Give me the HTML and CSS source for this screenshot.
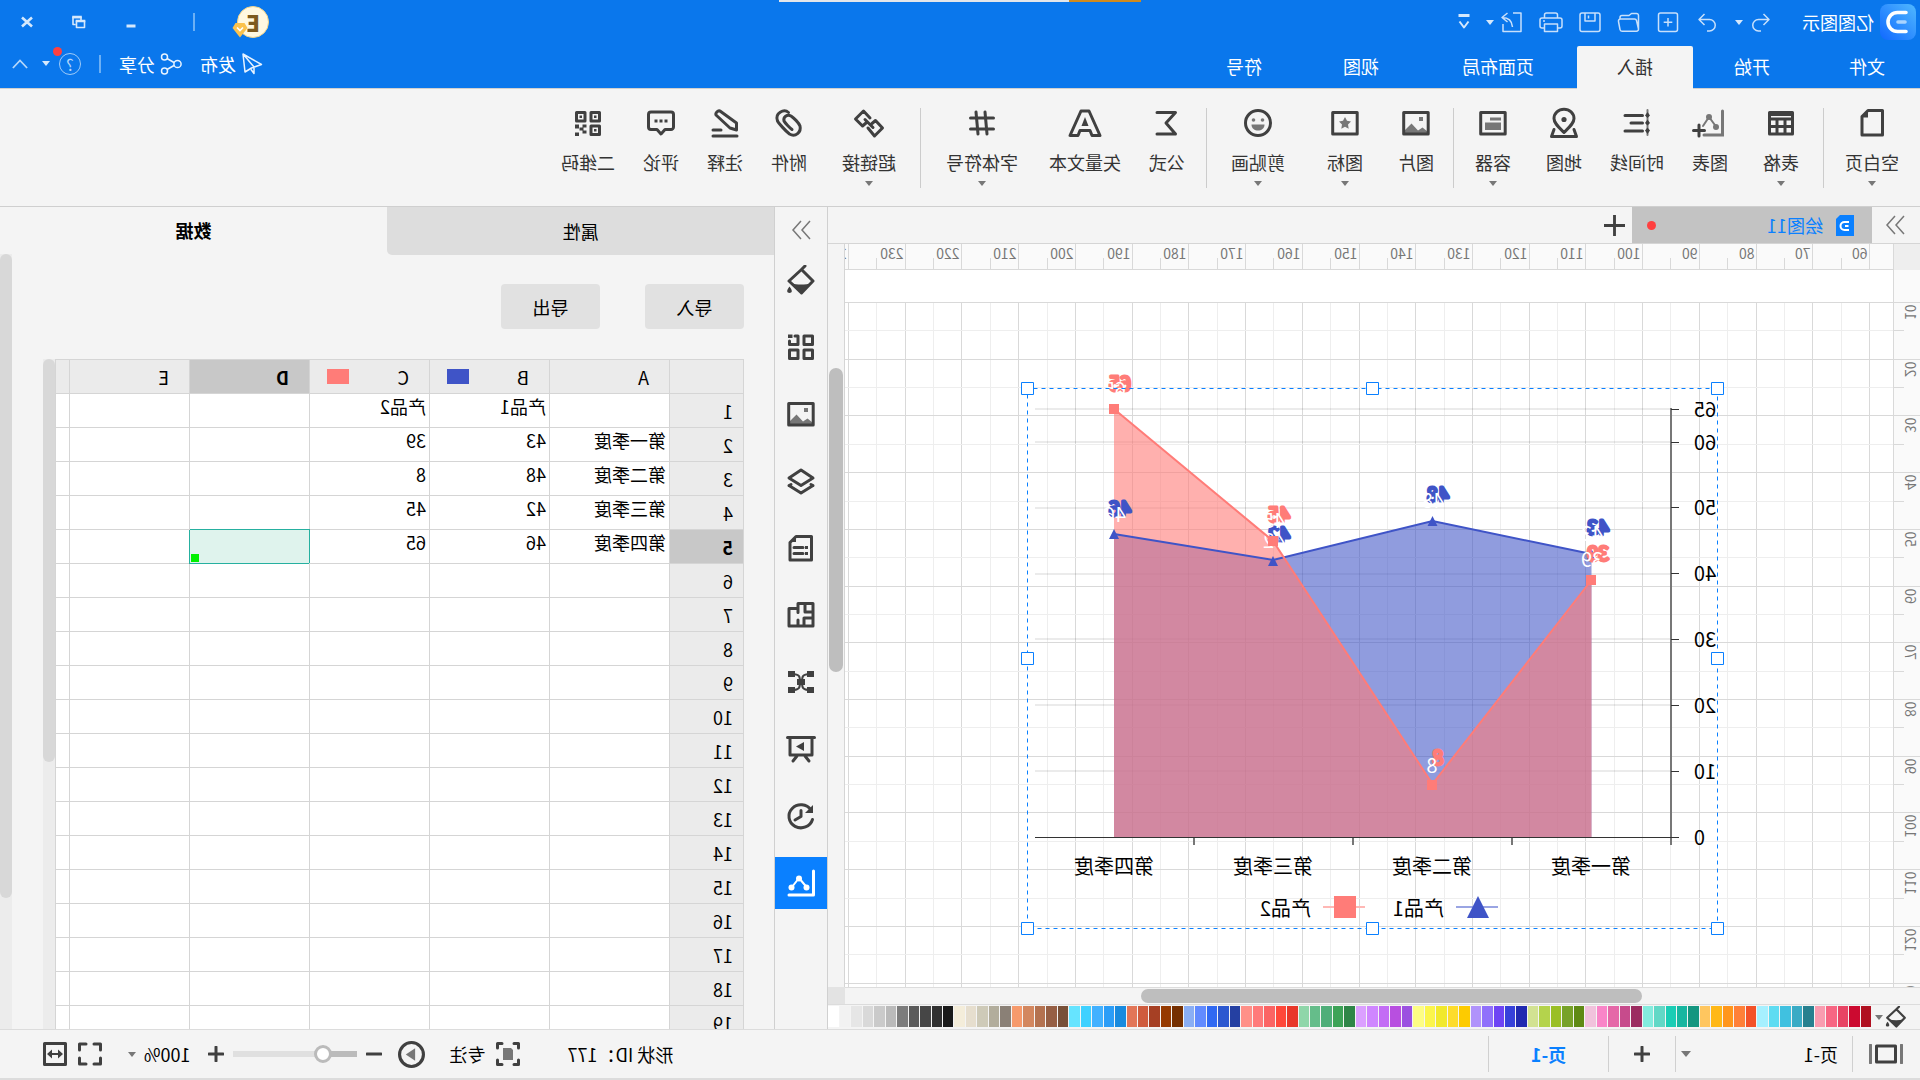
FILE: index.html
```html
<!DOCTYPE html>
<html lang="zh-CN">
<head>
<meta charset="utf-8">
<title>亿图图示</title>
<link rel="stylesheet" href="styles.css">
</head>
<body>
<div class="app">
  <header class="header">
    <div class="top-strip"></div>
    <div class="titlebar">
      <svg class="logo" viewBox="0 0 36 36"><defs><linearGradient id="logo-fill" x1="0" y1="0" x2="1" y2="1"><stop offset="0" stop-color="#50b8ff"/><stop offset="1" stop-color="#1068ff"/></linearGradient></defs><rect width="36" height="36" rx="8" fill="url(#logo-fill)"/><path d="M10 8.500h8.500a9.500 9.500 0 0 1 0 19H10" fill="none" stroke="#fff" stroke-width="3.600" stroke-linecap="round"/><path d="M11 18h7" stroke="#a9d4ff" stroke-width="3.600" stroke-linecap="round"/></svg>
      <span class="app-name">亿图图示</span>
      <div class="quick">
        <button class="icon-btn" aria-label="撤销"><svg viewBox="0 0 24 24"><path d="M9.500 4L4 9.500 9.500 15M4 9.500h10.500a5.700 5.700 0 0 1 0 11.500H12"/></svg></button>
        <button class="caret-btn" aria-label="撤销列表"></button>
        <button class="icon-btn" aria-label="重做"><svg viewBox="0 0 24 24"><path d="M14.500 4L20 9.500 14.500 15M20 9.500H9.500a5.700 5.700 0 0 0 0 11.500H12"/></svg></button>
        <button class="icon-btn" aria-label="新建"><svg viewBox="0 0 24 24"><rect x="2.500" y="3" width="19" height="18.500" rx="2"/><path d="M12 8v8.500M7.700 12.200h8.600"/></svg></button>
        <button class="icon-btn" aria-label="打开"><svg viewBox="0 0 24 24"><path d="M2.500 19V5.500a2 2 0 0 1 2-2h5l2.500 2h7a2 2 0 0 1 2 2V9M2.500 19l2-8.500a2 2 0 0 1 2-1.500h14a2 2 0 0 1 2 2.500l-1.500 8a2 2 0 0 1-2 1.700H4.500a2 2 0 0 1-2-2.200z"/></svg></button>
        <button class="icon-btn" aria-label="保存"><svg viewBox="0 0 24 24"><rect x="2" y="3" width="20" height="18.500" rx="2"/><path d="M7 3v8h10V3M13.500 5.500v3"/></svg></button>
        <button class="icon-btn" aria-label="打印"><svg viewBox="0 0 24 24"><path d="M5.500 8V5a2 2 0 0 1 2-2h9a2 2 0 0 1 2 2v3M5.500 18H3a2 2 0 0 1-2-2v-6a2 2 0 0 1 2-2h18a2 2 0 0 1 2 2v6a2 2 0 0 1-2 2h-2.500M5.500 14h13v7.500h-13zM18 11h2"/></svg></button>
        <button class="icon-btn" aria-label="导出"><svg viewBox="0 0 24 24"><path d="M11 3H3v18.500h18V14M16.500 3L22 7.500 16.500 12M22 7.500c-6 0-10 3-10.500 9.500"/></svg></button>
        <button class="caret-btn" aria-label="导出列表"></button>
        <button class="icon-btn customize" aria-label="自定义"><svg viewBox="0 0 24 24"><path d="M6.500 5.500h11" stroke-width="3"/><path d="M7.500 11.500l4.500 6 4.500-6" stroke-width="2"/></svg></button>
      </div>
      <div class="window-tools">
        <button class="avatar" aria-label="账户">E<svg viewBox="0 0 16 16"><path d="M3.500 1h9L15.500 6 8 15.500.5 6z" fill="#fbc24d"/><path d="M5 5.500l3 3 3-3" fill="none" stroke="#fff" stroke-width="1.700"/></svg></button>
        <i class="bar"></i>
        <button class="icon-btn" aria-label="最小化"><svg viewBox="0 0 24 24"><path d="M7.500 16h9" stroke-width="3"/></svg></button>
        <button class="icon-btn" aria-label="还原"><svg viewBox="0 0 24 24"><path d="M10 10V7.500h8v7H15.500M6.500 11h8v6.500h-8z" stroke-width="1.600"/><path d="M9.200 7h9.600M5.700 11h9.600" stroke-width="2.600"/></svg></button>
        <button class="icon-btn" aria-label="关闭"><svg viewBox="0 0 24 24"><path d="M7 7.500l10 9M17 7.500l-10 9" stroke-width="2.600"/></svg></button>
      </div>
    </div>
    <div class="menubar">
      <nav class="tabs">
        <a href="#" class="tab first">文件</a><a href="#" class="tab">开始</a><a href="#" class="tab active">插入</a><a href="#" class="tab wide">页面布局</a><a href="#" class="tab">视图</a><a href="#" class="tab">符号</a>
      </nav>
      <div class="share-tools">
        <button class="text-btn"><svg viewBox="0 0 22 22"><path d="M1.500 11.500L20 1l-2 18-6.500-4zM20 1L9 14v6.500l3-4"/></svg>发布</button>
        <button class="text-btn"><svg viewBox="0 0 22 22"><circle cx="4.500" cy="11" r="3.600"/><circle cx="17.500" cy="4" r="3"/><circle cx="17.500" cy="18" r="3"/><path d="M8 9.500L15 5.500M8 12.500l7 4"/></svg>分享</button>
        <i class="bar"></i>
        <button class="help" aria-label="帮助">?<i class="badge"></i></button>
        <button class="caret-btn" aria-label="帮助列表"></button>
        <button class="collapse" aria-label="收起"><svg viewBox="0 0 18 12"><path d="M1 10.500L9 2l8 8.500"/></svg></button>
      </div>
    </div>
  </header>

  <div class="ribbon">
    <div class="group">
      <button class="tool drop"><svg viewBox="0 0 30 30"><path class="d" d="M4.500 2.500H19l6 6v18.500H4.500z"/><path class="f" d="M19 2l7 7.500h-7z"/></svg>空白页</button>
    </div>
    <div class="group">
      <button class="tool drop"><svg viewBox="0 0 30 30"><path class="d" d="M3.500 4.500h23v21.500h-23zM3.500 11h23M3.500 18.500h23M11 11v15M19 11v15"/><path class="f" d="M3 4h24v4H3z"/></svg>表格</button>
      <button class="tool"><svg viewBox="0 0 30 30"><path class="g" d="M2.500 3v24H21" /><path class="g thin" d="M9 18.500L16 9l6 9"/><circle class="gf" cx="9" cy="19" r="3"/><circle class="gf" cx="16" cy="9" r="3"/><path class="d" d="M26 17v11M20.500 22.500h11"/></svg>图表</button>
      <button class="tool"><svg viewBox="0 0 30 30"><path class="g thin" d="M4.500 2v25"/><path class="d" d="M9.500 7.500H27M9.500 15H21M9.500 23H27"/><path class="f" d="M4.500 4l2.500 3.500L4.500 10 2 7.500zM4.500 11.500L7 15l-2.500 2.500L2 15zM4.500 19.500L7 22.500 4.500 26 2 22.500z"/></svg>时间线</button>
      <button class="tool"><svg viewBox="0 0 30 30"><path class="d" d="M15 24.500C9 18.500 5 15 5 10.500a10 9.300 0 0 1 20 0C25 15 21 18.500 15 24.500zM5 21.500L2.500 28.500h25L25 21.500"/><circle class="f" cx="15" cy="11.500" r="2.600"/></svg>地图</button>
      <button class="tool drop"><svg viewBox="0 0 30 30"><path class="d" d="M2.800 4.500h24.500v21.500H2.800z"/><path class="gf" d="M7 9.500h11v3H7zM7 14.500h16V22H7z"/></svg>容器</button>
    </div>
    <div class="group to-media">
      <button class="tool"><svg viewBox="0 0 30 30"><path class="gf" d="M3.500 23.500l5-4 4.500 3 6.500-7 7 7v3h-23zM8 9h4v4H8z"/><path class="d" d="M2.800 4.500h24.500v21.500H2.800z"/></svg>图片</button>
      <button class="tool drop"><svg viewBox="0 0 30 30"><path class="d" d="M2.800 4.500h24.500v21.500H2.800z"/><path class="gf" d="M15 9l2 3.700 4 .8-3 3 .7 4.300-3.700-2-3.700 2 .7-4.300-3-3 4-.8z"/></svg>图标</button>
      <button class="tool drop"><svg viewBox="0 0 30 30"><circle class="d" cx="15" cy="15" r="12.500"/><circle class="gf" cx="10.500" cy="12" r="1.800"/><circle class="gf" cx="19.500" cy="12" r="1.800"/><path class="gf" d="M8.500 16.500h13c0 8-13 8-13 0z"/></svg>剪贴画</button>
    </div>
    <div class="group to-text">
      <button class="tool"><svg viewBox="0 0 30 30"><path class="d" d="M25 4.500H6.500L16 15 6.500 26H25"/></svg>公式</button>
      <button class="tool"><svg viewBox="0 0 30 30"><path class="d" d="M11 3h8l11 24.500h-8l-2-5H10l-2 5H0z"/><path class="f" d="M15 9l3.500 9h-7z"/></svg>矢量文本</button>
      <button class="tool drop"><svg viewBox="0 0 30 30"><path class="d" d="M3.500 10h23M3.500 21h23M12 4l-2 22M21 4l-2 22"/></svg>字体符号</button>
    </div>
    <div class="group">
      <button class="tool drop"><svg viewBox="0 0 30 30"><path class="d" d="M14 10l6.500-7 8 8-7 7-3.500-3M16 20l-6.500 8-8-8 7-7.500 3.500 3M11 19.500l8-8"/></svg>超链接</button>
      <button class="tool"><svg viewBox="0 0 30 30"><path class="d" d="M15.500 4.500C20 .5 29.500 5 26.500 13c-1 2-8 10-12 13-6 3.500-12-2-10.500-8 1-3 6-8 9-10 4-2 8 1 7 5-1 2-6 7-8 8.500"/></svg>附件</button>
      <button class="tool"><svg viewBox="0 0 30 30"><path class="d" d="M20 3c1-1 5 1.500 4 4L10 20l-6.500 2V15zM3 28h24M19 22h8"/></svg>注释</button>
      <button class="tool"><svg viewBox="0 0 30 30"><path class="d" d="M5 4h20a2.500 2.500 0 0 1 2.500 2.500V19a2.500 2.500 0 0 1-2.500 2.500h-6L15 26l-4-4.500H5A2.500 2.500 0 0 1 2.500 19V6.500A2.500 2.500 0 0 1 5 4z"/><path class="f" d="M8.500 11.500h3v3h-3zM13.500 11.500h3v3h-3zM18.500 11.500h3v3h-3z"/></svg>评论</button>
      <button class="tool"><svg viewBox="0 0 30 30"><path class="d" d="M3.500 4.500h8.500v8.500H3.500zM18 4.500h8.500v8.500H18zM3.500 18H12v8.500H3.500z"/><path class="f" d="M6.500 7.500H9V10H6.500zM21 7.500h2.500V10H21zM6.500 21H9v2.500H6.500zM16.500 16.500h4v3h3v3h-3v3h-4v-3h3v-3h-3zM24 16.500h4v4h-4zM24 24.500h4V28h-4z"/></svg>二维码</button>
    </div>
  </div>

  <main class="main">
    <section class="editor">
      <div class="doc-tabs">
        <button class="expand" aria-label="展开"><svg class="dbl" viewBox="0 0 18 18"><path d="M1 0l8 9-8 9M10 0l8 9-8 9"/></svg></button>
        <a href="#" class="doc-tab"><svg viewBox="0 0 18 21"><path d="M0 0h14l4 4v17H0z" fill="#0a80ff"/><path d="M5 7h4.500a3.800 3.800 0 0 1 0 8H5M5.500 11H9" fill="none" stroke="#fff" stroke-width="2"/></svg>绘图11<i class="dot"></i></a>
        <button class="add-doc" aria-label="新建文档"><svg viewBox="0 0 22 22"><path d="M11 0v22M0 11h22"/></svg></button>
      </div>
      <div class="board">
        <div class="corner"></div>
        <svg class="ruler-h" id="ruler-h"></svg>
        <div class="gutter"></div>
        <svg class="ruler-v" id="ruler-v"></svg>
        <div class="canvas">
          <svg class="grid-lines" id="grid-lines"></svg>
          <svg class="chart" role="img" aria-label="面积图">
            <g transform="translate(-27 -270)">
              <path d="M249 409h636M249 442h636M249 508h636M249 574h636M249 639h636M249 705h636M249 771h636" stroke="#000" stroke-opacity=".08" stroke-width="2"/>
              <path d="M328.500 837V554L487.500 521 647 560 806 534V837z" fill="#3f54c7" fill-opacity=".58"/>
              <path d="M328.500 837V580L487.500 784 647 541 806 409V837z" fill="#ff7c78" fill-opacity=".6"/>
              <path d="M328.500 554L487.500 521 647 560 806 534" fill="none" stroke="#3f54c7" stroke-width="2"/>
              <path d="M328.500 549l5 10h-10zM487.500 516l5 10h-10zM647 556l5 10h-10zM806 529l5 10h-10z" fill="#3f54c7"/>
              <g class="label-back blue"><text x="322" y="535">43</text><text x="482" y="502">48</text><text x="641" y="542">42</text><text x="800" y="516">46</text></g>
              <g class="label"><text x="328" y="541">43</text><text x="487" y="508">48</text><text x="646" y="548">42</text><text x="805" y="522">46</text></g>
              <path d="M328.500 580L487.500 784 647 541 806 409" fill="none" stroke="#ff7c78" stroke-width="2"/>
              <path d="M324 575h10v10h-10zM483 780h10v10h-10zM642 536h10v10h-10zM801 404h10v10h-10z" fill="#ff7c78"/>
              <g class="label-back coral"><text x="322" y="561">39</text><text x="482" y="765">8</text><text x="641" y="522">45</text><text x="800" y="391">65</text></g>
              <g class="label"><text x="328" y="567">39</text><text x="488" y="773">8</text><text x="646" y="528">45</text><text x="805" y="397">65</text></g>
              <path d="M249 408v437M408 837v8M567 837v8M726 837v8" fill="none" stroke="#777" stroke-width="2"/>
              <path d="M241 409.500h8M241 442.500h8M241 507.500h8M241 573.500h8M241 639.500h8M241 705.500h8M241 771.500h8M241 837.500h644" fill="none" stroke="#333"/>
              <g class="axis end"><text x="226" y="417">65</text><text x="226" y="450">60</text><text x="226" y="515">50</text><text x="226" y="581">40</text><text x="226" y="647">30</text><text x="226" y="713">20</text><text x="226" y="779">10</text><text x="226" y="845">0</text></g>
              <g class="axis mid"><text x="329" y="874">第一季度</text><text x="488" y="874">第二季度</text><text x="647" y="874">第三季度</text><text x="806" y="874">第四季度</text></g>
              <path d="M422 907h42" stroke="#9aa5e3" stroke-width="2"/><path d="M442 896l11 22h-22z" fill="#3f54c7"/>
              <path d="M555 907h42" stroke="#ffb8b5" stroke-width="2"/><path d="M564 896h22v22h-22z" fill="#ff7c78"/>
              <g class="axis"><text x="476" y="916">产品1</text><text x="609" y="916">产品2</text></g>
              <g fill="none" stroke="#0a80ff"><path d="M202.500 388.500h690v540h-690z" stroke-dasharray="4 4"/>
              <path fill="#fff" d="M196.500 382.500h12v12h-12zM541.500 382.500h12v12h-12zM886.500 382.500h12v12h-12zM196.500 652.500h12v12h-12zM886.500 652.500h12v12h-12zM196.500 922.500h12v12h-12zM541.500 922.500h12v12h-12zM886.500 922.500h12v12h-12z"/></g>
            </g>
          </svg>
        </div>
        <div class="scroll-v"><i></i></div>
        <div class="scroll-h"><i></i></div>
        <div class="scroll-corner"></div>
      </div>
      <div class="palette">
        <button class="fill-btn" aria-label="填充颜色"><svg viewBox="0 0 30 30"><use href="#bucket"/></svg><i class="caret"></i></button>
        <div class="swatches" id="swatches"></div>
      </div>
    </section>

    <aside class="dock">
      <button class="dock-toggle" aria-label="收起面板"><svg class="dbl" viewBox="0 0 18 18"><path d="M0 0l8 9-8 9M9 0l8 9-8 9"/></svg></button>
      <button aria-label="填充"><svg viewBox="0 0 30 30"><g id="bucket"><path class="d" d="M14.500 4.500L27 16 14.500 28 3 16zM14.500 4.500L11 1"/><path class="f" d="M4 18c7 2 15 2 21 0L14.500 28zM26.500 21.500c4 5 2 6.500 0 6.500s-4-1.500 0-6.500z"/></g></svg></button>
      <button aria-label="主题"><svg viewBox="0 0 30 30"><path class="d" d="M3.500 4h8.500v8.500H3.500zM3.500 18H12v8.500H3.500zM18 18h8.500v8.500H18zM21 4h-3v8.500h8.500V9"/><path class="f" d="M23.500 2.500H28V6h-4.500z"/></svg></button>
      <button aria-label="图片"><svg viewBox="0 0 30 30"><path class="gf" d="M3.500 23.500l5-4 4.500 3 6.500-7 7 7v3h-23zM8 9h4v4H8z"/><path class="d" d="M2.800 4.500h24.500v21.500H2.800z"/></svg></button>
      <button aria-label="图层"><svg viewBox="0 0 30 30"><path class="d" d="M15 4l12 8-12 7.500L3 12zM3 19.500l12 7.500 12-7.500M3 19.500l2-1M27 19.500l-2-1"/></svg></button>
      <button aria-label="页面"><svg viewBox="0 0 30 30"><path class="d" d="M4.500 3.500H20l6 6v17.500H4.500z"/><path class="d" d="M13 14.500h9M13 20.500h9"/><path class="f" d="M20 3l6 6h-6zM8 13h3v3H8zM8 19h3v3H8z"/></svg></button>
      <button aria-label="平面图"><svg viewBox="0 0 30 30"><path class="d" d="M3 3.500h15v5h9V26H3zM18 8.500v4M3 12h8V4M3 18h9v8M18 20v6"/></svg></button>
      <button aria-label="思维导图"><svg viewBox="0 0 30 30"><path class="d thin" d="M6 7c8 0 8 3 8 8s0 8-8 8M24 7c-8 0-8 3-8 8s0 8 8 8"/><path class="f" d="M2 4h7v6H2zM21 4h7v6h-7zM2 20h7v6H2zM21 20h7v6h-7zM11 12h8v6h-8z"/></svg></button>
      <button aria-label="演示"><svg viewBox="0 0 30 30"><path class="d" d="M1.500 3.500h27M4 4v17h22V4M11 22l-4 5M19 22l4 5"/><path class="f" d="M12 8l8 4.500-8 4.500z"/></svg></button>
      <button aria-label="历史"><svg viewBox="0 0 30 30"><path class="d" d="M5 9a12 11.500 0 1 1-1.500 9.500M15 9.500v6l6 3.500"/><path class="f" d="M3 4v8h8z"/></svg></button>
      <button class="on" aria-label="数据"><svg viewBox="0 0 30 30"><path class="d" d="M2.500 3v24H27"/><path class="d thin" d="M9.500 19L17 10l7 9"/><circle class="f" cx="9.500" cy="19.500" r="3"/><circle class="f" cx="17" cy="10.500" r="3"/><circle class="f" cx="24.500" cy="19.500" r="3"/></svg></button>
    </aside>

    <section class="panel">
      <nav class="panel-tabs"><a href="#" class="panel-tab">属性</a><a href="#" class="panel-tab active">数据</a></nav>
      <div class="panel-body">
        <div class="panel-content">
          <div class="actions"><button>导入</button><button>导出</button></div>
          <div class="sheet">
            <div class="sheet-view">
              <table>
                <colgroup><col class="c-num"><col class="c-col"><col class="c-col"><col class="c-col"><col class="c-col"><col class="c-col"><col></colgroup>
                <thead><tr><th></th><th>A</th><th>B<i class="key blue"></i></th><th>C<i class="key coral"></i></th><th class="sel">D</th><th>E</th><th></th></tr></thead>
                <tbody>
                <tr><th>1</th><td></td><td>产品1</td><td>产品2</td><td></td><td></td><td></td></tr>
                <tr><th>2</th><td>第一季度</td><td>43</td><td>39</td><td></td><td></td><td></td></tr>
                <tr><th>3</th><td>第二季度</td><td>48</td><td>8</td><td></td><td></td><td></td></tr>
                <tr><th>4</th><td>第三季度</td><td>42</td><td>45</td><td></td><td></td><td></td></tr>
                <tr><th class="sel">5</th><td>第四季度</td><td>46</td><td>65</td><td class="picked"><i></i></td><td></td><td></td></tr>
                <tr><th>6</th><td></td><td></td><td></td><td></td><td></td><td></td></tr>
                <tr><th>7</th><td></td><td></td><td></td><td></td><td></td><td></td></tr>
                <tr><th>8</th><td></td><td></td><td></td><td></td><td></td><td></td></tr>
                <tr><th>9</th><td></td><td></td><td></td><td></td><td></td><td></td></tr>
                <tr><th>10</th><td></td><td></td><td></td><td></td><td></td><td></td></tr>
                <tr><th>11</th><td></td><td></td><td></td><td></td><td></td><td></td></tr>
                <tr><th>12</th><td></td><td></td><td></td><td></td><td></td><td></td></tr>
                <tr><th>13</th><td></td><td></td><td></td><td></td><td></td><td></td></tr>
                <tr><th>14</th><td></td><td></td><td></td><td></td><td></td><td></td></tr>
                <tr><th>15</th><td></td><td></td><td></td><td></td><td></td><td></td></tr>
                <tr><th>16</th><td></td><td></td><td></td><td></td><td></td><td></td></tr>
                <tr><th>17</th><td></td><td></td><td></td><td></td><td></td><td></td></tr>
                <tr><th>18</th><td></td><td></td><td></td><td></td><td></td><td></td></tr>
                <tr><th>19</th><td></td><td></td><td></td><td></td><td></td><td></td></tr>
                </tbody>
              </table>
            </div>
            <div class="track sheet-track"><i></i></div>
          </div>
        </div>
        <div class="track panel-track"><i></i></div>
      </div>
    </section>
  </main>

  <footer class="status">
    <button class="pages" aria-label="页面列表"><svg viewBox="0 0 34 20"><path class="g" d="M1.500 1v18M32.500 1v18"/><path class="d" d="M7.500 2h19v16h-19z"/></svg></button>
    <div class="page-select"><button>页-1</button><i class="caret"></i></div>
    <button class="add-page" aria-label="新建页"><svg viewBox="0 0 16 16"><path class="d" d="M8 1v14M1 8h14"/></svg></button>
    <a href="#" class="page-tab">页-1</a>
    <span class="shape-id">形状 ID：177</span>
    <div class="status-tools">
      <button class="focus"><svg viewBox="0 0 24 24"><path class="d" d="M1.500 6V1.500H6M18 1.500h4.500V6M1.500 18v4.500H6M18 22.500h4.500V18"/><path class="gf" d="M7 8l2-2h8v12H7z"/></svg>专注</button>
      <button class="play" aria-label="播放"><svg viewBox="0 0 26 26"><circle class="d" cx="13" cy="13" r="11.500"/><path class="gf" d="M9.500 7l9 6-9 6z"/></svg></button>
      <button class="minus" aria-label="缩小"><svg viewBox="0 0 16 16"><path class="d" d="M1 8h14"/></svg></button>
      <input class="zoom" type="range" min="0" max="100" value="23" aria-label="缩放">
      <button class="plus" aria-label="放大"><svg viewBox="0 0 16 16"><path class="d" d="M8 1v14M1 8h14"/></svg></button>
      <button class="percent">100%<i class="caret"></i></button>
      <button class="fullscreen" aria-label="全屏"><svg viewBox="0 0 24 24"><path class="d" d="M1.500 8V2H8M16 2h6.500v6M1.500 16v6H8M16 22h6.500v-6"/></svg></button>
      <button class="fit" aria-label="适合宽度"><svg viewBox="0 0 24 24"><path class="d" d="M1.500 1.500h21v21h-21z"/><path class="f" d="M4 12l5-4.500V11h6V7.500L20 12l-5 4.500V13H9v3.500z"/></svg></button>
    </div>
  </footer>
</div>
<script src="app.js"></script>
</body>
</html>
```

FILE: styles.css
```css
* { box-sizing: border-box; }
body { margin: 0; overflow: hidden; background: #f4f4f4; }
.app {
  display: flex; flex-direction: column; height: 100vh;
  font: 18px/24px "Noto Sans CJK SC", sans-serif; color: #333;
  background: #f4f4f4;
  transform: scaleX(-1);
}
button { font: inherit; color: inherit; background: none; border: 0; padding: 0; margin: 0; display: flex; align-items: center; justify-content: center; flex: none; white-space: nowrap; }
a { color: inherit; text-decoration: none; }
svg { display: block; flex: none; }
i { display: block; flex: none; }
.d { fill: none; stroke: #404040; stroke-width: 3; stroke-linejoin: round; stroke-linecap: round; }
.g { fill: none; stroke: #777; stroke-width: 3; stroke-linecap: round; }
.thin { stroke-width: 2; }
.f { fill: #404040; }
.gf { fill: #777; }
.caret { width: 0; height: 0; border: 4px solid transparent; border-top: 5px solid #777; border-bottom: 0; }
.blue { background: #3f54c7; fill: #3f54c7; stroke: #3f54c7; }
.coral { background: #ff7c78; fill: #ff7c78; stroke: #ff7c78; }

/* header */
.header { position: relative; flex: none; height: 89px; background: #0a77ec; border-bottom: 1px solid #d0d0d0; color: #fff; }
.top-strip { position: absolute; top: 0; left: calc(50% - 181px); width: 362px; height: 2px; background: linear-gradient(90deg, #d08a1e 72px, #e3e6ea 72px); }
.titlebar { display: flex; align-items: center; height: 44px; padding: 0 15px 0 4px; }
.logo { width: 36px; height: 36px; }
.app-name { margin: 0 29px 0 6px; }
.quick { display: flex; align-items: center; gap: 15px; }
.icon-btn svg { width: 24px; height: 24px; fill: none; stroke: #c8e0fb; stroke-width: 1.5px; stroke-linejoin: round; }
.icon-btn svg [stroke-width] { stroke: #d5e8fc; }
.caret-btn::before { content: ""; border: 4px solid transparent; border-top: 5px solid #d5e8fc; border-bottom: 0; }
.quick .caret-btn { width: 10px; margin-left: -10px; }
.customize { margin-left: -6px; }
.window-tools { display: flex; align-items: center; gap: 28px; margin-left: auto; }
.avatar { position: relative; width: 32px; height: 32px; margin-right: 14px; border-radius: 50%; background: #fff8e1; border: 1px solid #f2d58c; color: #7d5a1e; font: 900 22px/24px "Noto Sans CJK SC", sans-serif; }
.avatar svg { position: absolute; right: -6px; bottom: -1px; width: 16px; height: 16px; }
.bar { width: 2px; height: 18px; background: #6cb0f5; }
.window-tools .bar { margin-right: 22px; }
.menubar { display: flex; justify-content: space-between; height: 45px; padding-top: 2px; }
.tabs { display: flex; gap: 1px; }
.tab { height: 43px; padding: 0 40px; line-height: 40px; }
.tab.first { padding: 0 38px 0 35px; }
.tab.wide { padding: 0 42px; }
.tab.active { background: #f4f4f4; color: #333; border-radius: 2px 2px 0 0; }
.share-tools { display: flex; align-items: center; gap: 18px; padding: 0 12px 8px 0; }
.text-btn { gap: 5px; }
.text-btn svg { width: 22px; height: 22px; fill: none; stroke: #e8f3ff; stroke-width: 1.5px; stroke-linejoin: round; }
.help { position: relative; width: 22px; height: 22px; border: 1px solid #9fcbf8; border-radius: 50%; color: #b5d7fa; font-size: 16px; }
.badge { position: absolute; top: -7px; right: -7px; width: 9px; height: 9px; border-radius: 50%; background: #ff4040; }
.share-tools .caret-btn { width: 10px; margin: 0 -5px 0 -10px; }
.collapse svg { width: 16px; height: 12px; fill: none; stroke: #b5d7fa; stroke-width: 2px; }

/* ribbon */
.ribbon { display: flex; flex: none; height: 118px; padding-top: 19px; border-bottom: 1px solid #cfcfcf; }
.group { display: flex; height: 80px; }
.group + .group { border-left: 1px solid #ccc; padding-left: 3px; }
.ribbon .to-media { padding: 0 3px 0 5px; }
.ribbon .to-text { padding: 0 8px 0 7px; }
.tool { flex-direction: column; justify-content: flex-start; padding: 0 14px; }
.tool svg { width: 30px; height: 30px; margin-bottom: 12px; overflow: visible; }
.tool.drop { padding: 0 21px; }
.to-text .tool.drop { padding: 0 17px; }
.tool.drop::after { content: ""; margin-top: 7px; border: 4px solid transparent; border-top: 5px solid #777; border-bottom: 0; }

/* editor */
.main { display: grid; grid-template-columns: minmax(0, 1fr) 54px 774px; grid-template-rows: minmax(0, 1fr); flex: 1; min-height: 0; }
.editor { display: flex; flex-direction: column; min-width: 0; }
.doc-tabs { display: flex; flex: none; height: 37px; border-bottom: 1px solid #d5d5d5; }
.dbl { width: 18px; height: 18px; fill: none; stroke: #777; stroke-width: 1.5px; overflow: visible; }
.expand { width: 48px; }
.doc-tab { display: flex; align-items: center; width: 240px; padding: 0 15px 0 18px; background: #c3c3c3; color: #0a80ff; }
.doc-tab svg { width: 18px; height: 21px; margin-right: 13px; }
.dot { width: 9px; height: 9px; margin-left: auto; border-radius: 50%; background: #ff4040; }
.add-doc { margin-left: 7px; }
.add-doc svg { width: 21px; height: 21px; stroke: #404040; stroke-width: 3px; }
.board { display: grid; grid-template-columns: 27px minmax(0, 1fr) 17px; grid-template-rows: 26px minmax(0, 1fr) 18px; flex: 1; min-height: 0; }
.corner { background: #eee; border-right: 1px solid #d9d9d9; }
.ruler-h, .ruler-v { width: 100%; height: 100%; background: #fafafa; overflow: hidden; }
.ruler-h text, .ruler-v text { font-size: 14px; fill: #777; }
.ruler-h { border-bottom: 1px solid #d9d9d9; }
.ruler-v { border-right: 1px solid #d9d9d9; }
.gutter, .scroll-v { border-left: 1px solid #d5d5d5; }
.canvas { position: relative; overflow: hidden; background: #fff; }
.grid-lines, .chart { position: absolute; top: 0; left: 0; width: 100%; height: 100%; }
.major { stroke: #d9d9d9; }
.minor { stroke: #eee; }
.scroll-v { padding: 98px 1px 0; }
.scroll-v i { width: 14px; height: 304px; border-radius: 7px; background: #bebebe; }
.scroll-h { grid-column: 1 / 3; padding: 1px 0 0 278px; border: solid #dcdcdc; border-width: 1px 0; }
.scroll-h i { width: 501px; height: 14px; border-radius: 7px; background: #bebebe; }
.scroll-corner { background: #e3e3e3; border-bottom: 1px solid #dcdcdc; }
.label-back, .label, .axis { font-size: 20px; }
.label-back { stroke-width: 3px; stroke-linejoin: round; text-anchor: middle; }
.label { fill: #fff; text-anchor: middle; }
.axis { fill: #000; }
.axis.end { text-anchor: end; }
.axis.mid { text-anchor: middle; }
.palette { display: flex; flex: none; height: 24px; }
.fill-btn { width: 49px; padding-left: 8px; gap: 2px; }
.fill-btn svg { width: 22px; height: 22px; }
.swatches { display: flex; flex: 1; gap: 1px; padding: 1px 0 2px; }
.swatches i { flex: 1 1 0; }

/* dock */
.dock { display: flex; flex-direction: column; gap: 15px; border: solid #d0d0d0; border-width: 0 1px; }
.dock button { height: 52px; }
.dock .dock-toggle { height: 32px; padding-top: 14px; }
.dock svg { width: 30px; height: 30px; }
.dock .dbl { width: 18px; height: 18px; }
.dock .on { background: #0a80ff; }
.on .d { stroke: #fff; }
.on .f { fill: #fff; }

/* data panel */
.panel { display: flex; flex-direction: column; min-height: 0; color: #000; }
.panel-tabs { display: grid; grid-template-columns: 1fr 1fr; flex: none; height: 47px; }
.panel-tab { background: #ddd; border-radius: 0 0 5px 0; text-align: center; line-height: 48px; }
.panel-tab.active { background: none; font-weight: 700; line-height: 46px; }
.panel-body { display: flex; flex: 1; min-height: 0; }
.panel-content { display: flex; flex-direction: column; flex: 1; min-width: 0; padding: 30px 31px 0 30px; }
.actions { display: flex; gap: 45px; margin-bottom: 30px; }
.actions button { width: 99px; height: 45px; border-radius: 4px; background: #e1e1e1; }
.sheet { display: flex; flex: 1; min-height: 0; }
.sheet-view { flex: 1; min-width: 0; overflow: hidden; background: #fff; }
table { width: 100%; table-layout: fixed; border-collapse: separate; border-spacing: 0; }
.c-num { width: 75px; }
.c-col { width: 120px; }
th, td { position: relative; height: 34px; padding: 0; border: solid #d5d5d5; border-width: 0 1px 1px 0; font-weight: 400; text-align: left; }
td { padding: 0 0 9px 3px; }
th { padding-left: 10px; background: #ebebeb; }
th:first-child { border-left: 1px solid #d5d5d5; }
thead th { height: 35px; padding-left: 20px; border-top: 1px solid #d5d5d5; }
.sel { background: #c8c8c8; font-weight: 700; }
.key { position: absolute; top: 9px; right: 17px; width: 22px; height: 15px; }
.picked { background: #dff3ed; box-shadow: -1px -1px 0 #26b0a0; border-color: #26b0a0; }
.picked i { position: absolute; right: 1px; bottom: 1px; width: 8px; height: 8px; background: #00f000; }
.track { flex: none; width: 12px; background: #ececec; }
.track i { border-radius: 6px; background: #d8d8d8; }
.sheet-track i { height: 403px; }
.panel-track i { height: 644px; }

/* status bar */
.status { display: flex; align-items: center; flex: none; height: 51px; border: solid #dcdcdc; border-width: 1px 0 2px; color: #000; }
.status > * { flex: none; }
.pages { width: 67px; }
.pages svg { width: 34px; height: 20px; }
.page-select { display: flex; align-items: center; justify-content: space-between; width: 178px; height: 36px; padding: 0 5px 0 14px; border: solid #d0d0d0; border-width: 0 1px; }
.page-select .caret { border-width: 6px 5px 0; }
.add-page { width: 67px; height: 36px; border-right: 1px solid #d0d0d0; }
.add-page svg, .minus svg, .plus svg { width: 16px; height: 16px; }
.page-tab { width: 120px; height: 36px; border-right: 1px solid #d0d0d0; text-align: center; line-height: 36px; font-weight: 700; color: #0a80ff; }
.shape-id { margin-left: auto; margin-right: 48px; }
.status-tools { display: flex; align-items: center; padding-right: 43px; }
.focus { gap: 10px; margin-right: 25px; }
.focus svg, .fullscreen svg, .fit svg { width: 24px; height: 24px; }
.play svg { width: 27px; height: 27px; }
.minus { margin: 0 9px 0 16px; }
.zoom { appearance: none; width: 124px; height: 18px; margin: 0; background: linear-gradient(90deg, #bbb 28px, #e0e0e0 28px) center / 100% 6px no-repeat; }
.zoom::-webkit-slider-thumb { appearance: none; width: 18px; height: 18px; border: 3px solid #bbb; border-radius: 50%; background: #fff; }
.plus { margin: 0 17px 0 9px; }
.percent { gap: 8px; margin-right: 26px; }
.fullscreen { margin-right: 11px; }
```

FILE: app.js
```js
const NS = "http://www.w3.org/2000/svg";
const STEP = 56.72;

function add(parent, name, attrs, text) {
  const el = document.createElementNS(NS, name);
  for (const key in attrs) el.setAttribute(key, attrs[key]);
  if (text !== undefined) el.textContent = text;
  parent.appendChild(el);
}

function line(parent, kind, x1, y1, x2, y2) {
  add(parent, "line", { class: kind, x1, y1, x2, y2, "shape-rendering": "crispEdges" });
}

const rulerH = document.getElementById("ruler-h");
const rulerV = document.getElementById("ruler-v");
const grid = document.getElementById("grid-lines");
const width = grid.clientWidth || grid.parentNode.clientWidth;
const height = grid.clientHeight || grid.parentNode.clientHeight;

/* horizontal ruler and vertical grid lines: 60 mm sits 23px from the left edge */
for (let k = 0; 23 + STEP * k < width; k++) {
  const x = Math.round(23 + STEP * k) + 0.5;
  const mid = Math.round(23 + STEP * (k - 0.5)) + 0.5;
  line(grid, "minor", mid, 32, mid, height);
  line(grid, "major", x, 32, x, height);
  line(rulerH, "major", mid, 14, mid, 26);
  line(rulerH, "major", x, 0, x, 26);
  add(rulerH, "text", { x: x + 2, y: 15 }, 60 + k * 10);
}

/* vertical ruler and horizontal grid lines: the page starts 32px below the ruler */
for (let k = 0; 32 + STEP * k < height; k++) {
  const y = Math.round(32 + STEP * k) + 0.5;
  const mid = Math.round(32 + STEP * (k + 0.5)) + 0.5;
  line(grid, "minor", 0, mid, width, mid);
  line(grid, "major", 0, y, width, y);
  line(rulerV, "major", 16, mid, 27, mid);
  line(rulerV, "major", 0, y, 27, y);
  const label = 10 + k * 10;
  add(rulerV, "text", { transform: `translate(15 ${y + 2}) rotate(-90)`, "text-anchor": "end" }, label);
}

const colors = `b01020 cc0a30 e84464 f76683 f99cb0 27808f 3aabc5 40c1e0 5edcf2 a6f0ff
f35228 ff8038 ff961c ffb817 ffc65f 149680 17b6a0 1acdb5 62d8c6 84ecde
9c2c60 c74b8c e568a8 f985c8 f1c2dc 5f8a14 77a228 9abf25 b4d34c d2e292
2029b0 3641da 6e44f4 9070fb b093fb fdcb00 fddc2c f1e92c fbf54c fdfd84
9b51e0 b84fe0 c36cf5 cf86ff dba0ff 2f8648 3da357 4fae79 65bd8a 8fd6a9
e8382a ff483a fb6464 ff7a7a ff9088 2540a2 2c58d0 3069f2 628bff 8aaef4
752f00 963a00 a64024 cf5c3e e27658 188ade 2b9df7 42b1ff 3fd1ff 66e4ff
785038 965f44 b47250 d3875f f69a6c 8a8076 b2ad9c cecab8 e6dece f4edda
1a1a1a 303030 464646 5a5a5a 7c7c7c bababa cacaca d9d9d9 e6e6e6 f2f2f2 ffffff`.split(/\s+/);
const swatches = document.getElementById("swatches");
for (const color of colors) {
  const cell = document.createElement("i");
  cell.style.background = "#" + color;
  swatches.appendChild(cell);
}
```
